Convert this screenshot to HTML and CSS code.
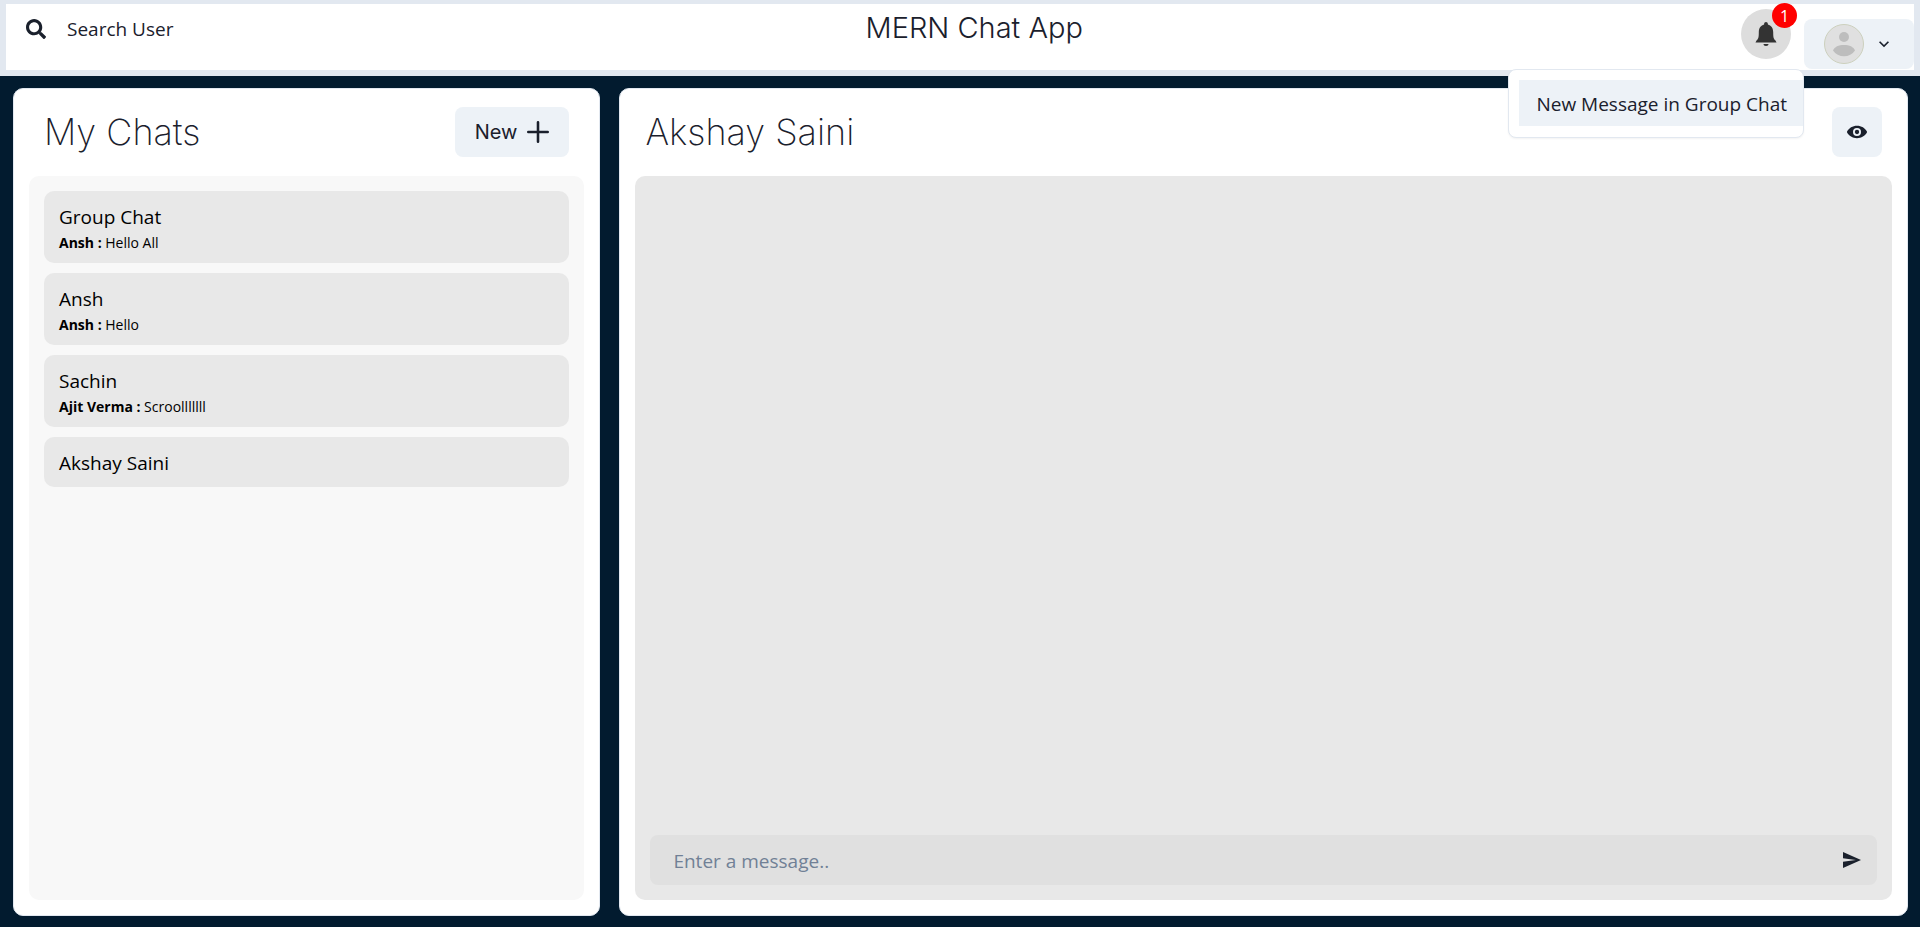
FILE: index.html
```html
<!DOCTYPE html>
<html lang="en">
<head>
<meta charset="utf-8">
<meta name="viewport" content="width=device-width, initial-scale=1">
<title>MERN Chat App</title>
<link rel="stylesheet" href="styles.css">
</head>
<body>
<header class="topbar">
  <button class="search" type="button">
    <svg class="search-icon" viewBox="0 0 512 512" aria-hidden="true"><path fill="currentColor" d="M505 442.700L405.300 343c-4.500-4.500-10.600-7-17-7H372c27.600-35.300 44-79.700 44-128C416 93.100 322.900 0 208 0S0 93.100 0 208s93.100 208 208 208c48.300 0 92.700-16.400 128-44v16.300c0 6.400 2.500 12.500 7 17l99.700 99.700c9.400 9.400 24.600 9.400 33.900 0l28.300-28.300c9.400-9.400 9.400-24.600.1-34zM208 336c-70.700 0-128-57.200-128-128 0-70.700 57.200-128 128-128 70.700 0 128 57.200 128 128 0 70.700-57.200 128-128 128z"/></svg>
    <span>Search User</span>
  </button>
  <h1 class="brand">MERN Chat App</h1>
  <div class="actions">
    <div class="notify">
      <button class="bell" type="button" aria-label="Notifications">
        <svg viewBox="0 0 24 24" aria-hidden="true"><path fill="currentColor" d="M12 24c1.600 0 2.500-.8 2.500-2h-5c0 1.200.9 2 2.500 2zM21.500 18.500c-1.900-1.500-2.300-3-2.300-8.200 0-4.300-2.200-6.900-5.300-7.700V1.900C13.900.8 13 0 12 0s-1.900.8-1.900 1.900v.7c-3.100.8-5.300 3.400-5.300 7.700 0 5.200-.4 6.700-2.300 8.200L1.500 20.500h21z"/></svg>
      </button>
      <span class="badge">1</span>
      <div class="menu" role="menu">
        <button class="menu-item" type="button" role="menuitem">New Message in Group Chat</button>
      </div>
    </div>
    <button class="profile" type="button" aria-label="Profile">
      <svg class="avatar" viewBox="0 0 40 40" aria-hidden="true"><circle cx="20" cy="20" r="19.500" fill="#e0e0e0" stroke="#ccd0bd"/><circle cx="20" cy="13" r="5" fill="#bdbdbd"/><path fill="#bdbdbd" d="M9 26.500C10.500 22.800 14.500 21 20 21s9.500 1.800 11 5.500C28.500 30.300 24.500 32.300 20 32.300S11.500 30.300 9 26.500z"/></svg>
      <svg class="chevron" viewBox="0 0 24 24" aria-hidden="true"><path fill="currentColor" d="M16.590 8.590L12 13.170 7.410 8.590 6 10l6 6 6-6z"/></svg>
    </button>
  </div>
</header>
<main class="workspace">
  <section class="panel chats">
    <div class="panel-head">
      <h2 class="panel-title">My Chats</h2>
      <button class="new-chat" type="button">New
        <svg viewBox="0 0 24 24" aria-hidden="true"><path fill="none" stroke="currentColor" stroke-width="2.800" stroke-linecap="round" d="M12 1.400v21.200M1.400 12h21.200"/></svg>
      </button>
    </div>
    <div class="chat-list">
      <button class="chat" type="button"><span class="chat-name">Group Chat</span><span class="chat-last"><b>Ansh :</b> Hello All</span></button>
      <button class="chat" type="button"><span class="chat-name">Ansh</span><span class="chat-last"><b>Ansh :</b> Hello</span></button>
      <button class="chat" type="button"><span class="chat-name">Sachin</span><span class="chat-last"><b>Ajit Verma :</b> Scroolllllll</span></button>
      <button class="chat" type="button"><span class="chat-name">Akshay Saini</span></button>
    </div>
  </section>
  <section class="panel conversation">
    <div class="panel-head">
      <h2 class="panel-title">Akshay Saini</h2>
      <button class="view" type="button" aria-label="View profile">
        <svg viewBox="0 0 24 24" aria-hidden="true"><path fill="currentColor" fill-rule="evenodd" d="M23.900 11.400C21.700 7.500 17.300 4.600 12 4.600S2.300 7.500.1 11.400c-.2.400-.2.800 0 1.200 2.200 3.900 6.600 6.800 11.900 6.800s9.700-2.900 11.900-6.800c.2-.4.200-.8 0-1.200zM12 16.800a4.800 4.800 0 1 1 0-9.600 4.800 4.800 0 0 1 0 9.600z"/><circle cx="12" cy="12" r="2.600" fill="currentColor"/></svg>
      </button>
    </div>
    <div class="messages">
      <form class="composer">
        <input class="message-input" type="text" aria-label="Message" placeholder="Enter a message..">
        <button class="send" type="button" aria-label="Send">
          <svg viewBox="0 0 18 16" aria-hidden="true"><path fill="currentColor" d="M0 0l18 8L0 16v-6.200L12.800 8 0 6.200z"/></svg>
        </button>
      </form>
    </div>
  </section>
</main>
</body>
</html>
```
FILE: styles.css
```css
* {
  box-sizing: border-box;
}

body {
  margin: 0;
  min-height: 100vh;
  display: flex;
  flex-direction: column;
  background: #021b2f;
  color: #1a202c;
  font: 400 19px/30px "Open Sans", "Noto Sans", sans-serif;
}

button,
input {
  font: inherit;
  color: inherit;
  border: 0;
  padding: 0;
  background: none;
}

button {
  cursor: pointer;
}

h1,
h2 {
  margin: 0;
  font-family: Inter, sans-serif;
}

svg {
  display: block;
}

.topbar {
  display: flex;
  justify-content: space-between;
  align-items: flex-start;
  height: 76px;
  border: 6px solid #e2e8f0;
  border-top-width: 4px;
  background: #fff;
}

.search {
  display: flex;
  align-items: center;
  gap: 21px;
  height: 50px;
  margin-right: 14px;
  padding: 0 20px;
  font-weight: 500;
}

.search-icon {
  width: 20px;
  height: 20px;
}

.brand {
  font-size: 29px;
  font-weight: 300;
  line-height: 48px;
}

.actions {
  display: flex;
  gap: 13px;
}

.notify {
  position: relative;
  padding-top: 5px;
}

.bell {
  display: grid;
  place-items: center;
  width: 50px;
  height: 50px;
  border-radius: 50%;
  background: #ddd;
  color: #333;
}

.bell svg {
  width: 24px;
  height: 24px;
}

.badge {
  position: absolute;
  top: -1px;
  right: -6px;
  width: 25px;
  height: 25px;
  border-radius: 50%;
  background: #f00;
  color: #fff;
  font-size: 16px;
  line-height: 26px;
  text-align: center;
}

.menu {
  position: absolute;
  top: 65px;
  right: -13px;
  padding: 10px 0 11px 10px;
  border: 1px solid #e2e8f0;
  border-radius: 8px;
  background: #fff;
  box-shadow: 0 1px 2px rgba(0, 0, 0, 0.05);
}

.menu-item {
  padding: 9px 16px 7px 17px;
  background: #edf2f7;
  white-space: nowrap;
}

.profile {
  display: flex;
  align-items: center;
  gap: 10px;
  height: 50px;
  margin-top: 15px;
  padding: 0 20px;
  border-radius: 8px;
  background: #edf2f7;
}

.avatar {
  width: 40px;
  height: 40px;
}

.chevron {
  width: 20px;
  height: 20px;
}

.workspace {
  flex: 1;
  display: flex;
  justify-content: space-between;
  padding: 12px 12px 11px 13px;
}

.panel {
  display: flex;
  flex-direction: column;
  padding: 15px;
  border: 1px solid #e2e8f0;
  border-radius: 10px;
  background: #fff;
}

.chats {
  width: 31%;
}

.conversation {
  width: 68%;
}

.panel-head {
  display: flex;
  justify-content: space-between;
  align-items: center;
  padding: 3px 15px 19px;
}

.conversation .panel-head {
  padding-right: 10px;
  padding-left: 10px;
}

.panel-title {
  font-size: 36px;
  font-weight: 200;
  line-height: 50px;
}

.new-chat {
  display: flex;
  align-items: center;
  gap: 10px;
  height: 50px;
  padding: 0 20px;
  border-radius: 8px;
  background: #edf2f7;
  font-family: Inter, sans-serif;
  font-size: 20px;
}

.new-chat svg {
  width: 22px;
  height: 22px;
}

.chat-list {
  flex: 1;
  display: flex;
  flex-direction: column;
  gap: 10px;
  padding: 15px;
  border-radius: 10px;
  background: #f8f8f8;
}

.chat {
  display: flex;
  flex-direction: column;
  padding: 11px 15px 9px;
  border-radius: 10px;
  background: #e8e8e8;
  color: #000;
  text-align: left;
}

.chat-last {
  font-size: 14px;
  line-height: 22px;
}

.view {
  display: grid;
  place-items: center;
  width: 50px;
  height: 50px;
  border-radius: 8px;
  background: #edf2f7;
}

.view svg {
  width: 20px;
  height: 20px;
}

.messages {
  flex: 1;
  display: flex;
  flex-direction: column;
  justify-content: flex-end;
  padding: 15px;
  border-radius: 10px;
  background: #e8e8e8;
}

.composer {
  display: flex;
  height: 50px;
  border-radius: 8px;
  background: #e0e0e0;
}

.message-input {
  flex: 1;
  min-width: 0;
  padding: 2px 23px 0;
  outline: 0;
}

.message-input::placeholder {
  color: #718096;
  opacity: 1;
}

.send {
  display: grid;
  place-items: center;
  width: 50px;
}

.send svg {
  width: 18px;
  height: 16px;
}
```
